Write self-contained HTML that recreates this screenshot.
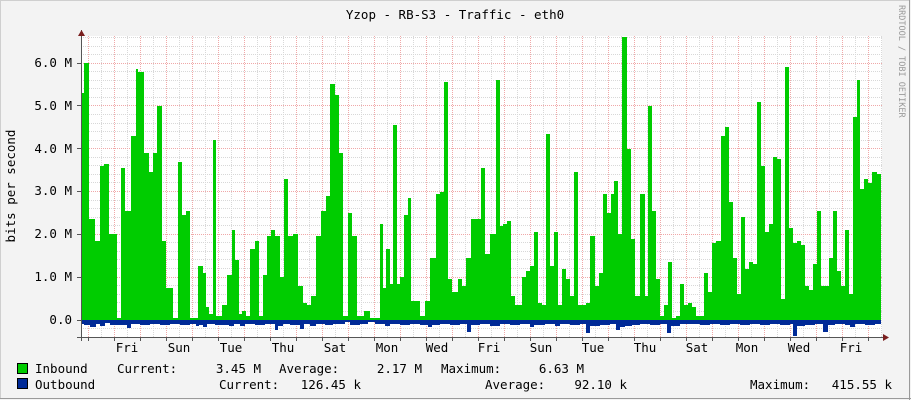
<!DOCTYPE html>
<html><head><meta charset="utf-8"><style>
html,body{margin:0;padding:0;background:#f3f3f3;}
svg{display:block;}
text{font-family:"DejaVu Sans Mono","Liberation Mono",monospace;font-size:12.5px;fill:#000;}
</style></head><body>
<svg width="911" height="400" viewBox="0 0 911 400" xmlns="http://www.w3.org/2000/svg">
<rect x="0" y="0" width="911" height="400" fill="#f3f3f3"/>
<rect x="0.5" y="0.5" width="909" height="398" fill="none" stroke="#cfcfcf"/>
<line x1="0" y1="398.5" x2="911" y2="398.5" stroke="#9a9a9a"/>
<line x1="909.5" y1="0" x2="909.5" y2="400" stroke="#9a9a9a"/>
<rect x="81" y="36" width="801" height="301" fill="#fff"/>
<g id="grid" stroke-dasharray="1,1" stroke-width="1">
<g stroke="#d8d8d8">
<path d="M81,328.5H882M81,311.5H882M81,302.5H882M81,294.5H882M81,285.5H882M81,268.5H882M81,259.5H882M81,251.5H882M81,242.5H882M81,225.5H882M81,217.5H882M81,208.5H882M81,200.5H882M81,182.5H882M81,174.5H882M81,165.5H882M81,157.5H882M81,140.5H882M81,131.5H882M81,123.5H882M81,114.5H882M81,97.5H882M81,88.5H882M81,80.5H882M81,71.5H882M81,54.5H882M81,46.5H882M81,37.5H882"/>
<path d="M101.5,36V337M127.5,36V337M153.5,36V337M179.5,36V337M205.5,36V337M231.5,36V337M257.5,36V337M283.5,36V337M309.5,36V337M335.5,36V337M361.5,36V337M387.5,36V337M413.5,36V337M439.5,36V337M465.5,36V337M491.5,36V337M517.5,36V337M543.5,36V337M569.5,36V337M595.5,36V337M621.5,36V337M647.5,36V337M673.5,36V337M699.5,36V337M725.5,36V337M751.5,36V337M777.5,36V337M803.5,36V337M829.5,36V337M855.5,36V337M881.5,36V337"/>
</g>
<g stroke="#f0a8a8">
<path d="M81,277.5H882M81,234.5H882M81,191.5H882M81,148.5H882M81,105.5H882M81,63.5H882"/>
<path d="M88.5,36V337M114.5,36V337M140.5,36V337M166.5,36V337M192.5,36V337M218.5,36V337M244.5,36V337M270.5,36V337M296.5,36V337M322.5,36V337M348.5,36V337M374.5,36V337M400.5,36V337M426.5,36V337M452.5,36V337M478.5,36V337M504.5,36V337M530.5,36V337M556.5,36V337M582.5,36V337M608.5,36V337M634.5,36V337M660.5,36V337M686.5,36V337M712.5,36V337M738.5,36V337M764.5,36V337M790.5,36V337M816.5,36V337M842.5,36V337M868.5,36V337"/>
</g>
</g>
<path fill="#00cc00" d="M81,320V93H84V63H89V219H95V241H100V166H104V164H109V234H117V318H121V168H125V211H131V136H136V69H138V72H144V153H149V172H153V153H157V106H162V241H166V288H173V318H178V162H182V215H186V211H190V318H198V266H203V273H206V307H209V314H213V140H216V316H222V305H227V275H232V230H235V260H239V314H242V311H246V316H250V249H255V241H259V316H263V275H267V236H271V230H275V236H280V277H284V179H288V236H293V234H298V286H303V303H307V305H311V296H316V236H321V211H326V196H330V84H335V95H339V153H343V316H348V213H352V236H357V316H364V311H370V318H380V224H383V288H386V249H390V284H393V125H397V284H400V277H404V215H408V198H411V301H420V316H425V301H430V258H436V194H440V192H444V82H448V279H452V292H458V279H462V286H466V258H471V219H481V168H485V254H490V234H496V80H500V226H503V224H507V221H511V296H515V305H522V277H526V271H530V266H534V232H538V303H542V305H546V134H550V266H554V232H558V305H562V269H566V279H570V296H574V172H578V305H586V303H590V236H595V286H599V273H603V194H607V213H611V194H614V181H618V234H622V37H627V149H631V239H635V296H640V194H645V296H648V106H652V211H656V279H660V316H664V305H668V262H672V318H676V316H680V284H684V305H688V303H692V307H696V316H704V273H708V292H712V243H716V241H721V136H725V127H729V202H733V258H737V294H741V217H745V269H749V262H753V264H757V102H761V166H765V232H769V224H773V157H777V159H781V299H785V67H789V228H793V243H797V241H801V245H805V286H809V290H813V264H817V211H821V286H829V258H833V211H837V271H841V286H845V230H849V294H853V117H857V80H860V189H864V179H868V183H872V172H877V174H881V320Z"/>
<path fill="#002a97" d="M81,320V324H84V325H90V327H96V324H100V326H105V323H110V325H120V325H127V328H131V324H140V325H150V324H160V325H170V324H180V325H190V324H196V326H199V325H203V327H207V324H215V325H225V325H229V326H234V324H240V326H245V324H255V325H265V324H272V324H275V330H278V326H283V324H290V325H300V329H304V324H310V326H316V324H325V325H333V324H345V322H350V325H360V324H368V322H375V324H385V326H390V324H400V325H410V324H420V325H428V327H432V325H440V324H450V325H460V324H467V332H471V325H480V324H490V326H500V324H510V325H520V324H530V327H534V325H545V324H555V326H560V324H570V325H580V324H586V333H590V326H600V325H610V324H616V330H620V327H625V326H632V325H640V324H650V325H660V324H667V333H671V326H680V324H690V324H700V325H710V324H720V325H730V324H740V325H750V324H760V325H770V324H780V325H790V324H793V336H797V326H805V325H815V324H823V332H828V325H835V324H845V325H850V327H855V324H865V325H875V324H881V320Z"/>
<line x1="81.5" y1="30" x2="81.5" y2="341" stroke="#555"/>
<line x1="77" y1="337.5" x2="886" y2="337.5" stroke="#555"/>
<path d="M78,36L81.5,30L85,36Z" fill="#7a1f1f"/>
<path d="M883,334L889,337.5L883,341Z" fill="#7a1f1f"/>
<g stroke="#555"><path d="M77,320.5H81M77,277.5H81M77,234.5H81M77,191.5H81M77,148.5H81M77,105.5H81M77,63.5H81M88.5,337V341M114.5,337V341M140.5,337V341M166.5,337V341M192.5,337V341M218.5,337V341M244.5,337V341M270.5,337V341M296.5,337V341M322.5,337V341M348.5,337V341M374.5,337V341M400.5,337V341M426.5,337V341M452.5,337V341M478.5,337V341M504.5,337V341M530.5,337V341M556.5,337V341M582.5,337V341M608.5,337V341M634.5,337V341M660.5,337V341M686.5,337V341M712.5,337V341M738.5,337V341M764.5,337V341M790.5,337V341M816.5,337V341M842.5,337V341M868.5,337V341"/></g>
<text x="455" y="19" text-anchor="middle">Yzop - RB-S3 - Traffic - eth0</text>
<g text-anchor="end">
<text x="72" y="324">0.0</text>
<text x="72" y="281">1.0 M</text>
<text x="72" y="238">2.0 M</text>
<text x="72" y="195">3.0 M</text>
<text x="72" y="153">4.0 M</text>
<text x="72" y="110">5.0 M</text>
<text x="72" y="67">6.0 M</text>
</g>
<text transform="translate(15,186) rotate(-90)" text-anchor="middle">bits per second</text>
<text transform="translate(899,5) rotate(90)" style="font-size:8.5px;fill:#999">RRDTOOL / TOBI OETIKER</text>
<g text-anchor="middle">
<text x="127" y="352">Fri</text><text x="179" y="352">Sun</text><text x="231" y="352">Tue</text><text x="283" y="352">Thu</text><text x="335" y="352">Sat</text><text x="387" y="352">Mon</text><text x="437" y="352">Wed</text><text x="489" y="352">Fri</text><text x="541" y="352">Sun</text><text x="593" y="352">Tue</text><text x="645" y="352">Thu</text><text x="697" y="352">Sat</text><text x="747" y="352">Mon</text><text x="799" y="352">Wed</text><text x="851" y="352">Fri</text>
</g>
<rect x="17.5" y="363.5" width="10" height="10" fill="#00cc00" stroke="#000"/>
<rect x="17.5" y="378.5" width="10" height="10" fill="#002a97" stroke="#000"/>
<text x="35" y="373">Inbound</text>
<text x="117" y="373">Current:</text>
<text x="261" y="373" text-anchor="end">3.45 M</text>
<text x="279" y="373">Average:</text>
<text x="422" y="373" text-anchor="end">2.17 M</text>
<text x="441" y="373">Maximum:</text>
<text x="584" y="373" text-anchor="end">6.63 M</text>
<text x="35" y="389">Outbound</text>
<text x="219" y="389">Current:</text>
<text x="361" y="389" text-anchor="end">126.45 k</text>
<text x="485" y="389">Average:</text>
<text x="627" y="389" text-anchor="end">92.10 k</text>
<text x="750" y="389">Maximum:</text>
<text x="892" y="389" text-anchor="end">415.55 k</text>
</svg>
</body></html>
